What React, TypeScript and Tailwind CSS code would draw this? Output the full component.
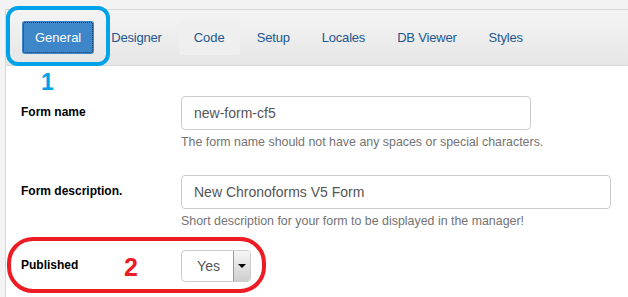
import React from 'react';

const tabs = ['General', 'Designer', 'Code', 'Setup', 'Locales', 'DB Viewer', 'Styles'];

function Tab({ label }: { label: string }) {
  if (label === 'General')
    return <div className="h-[33px] px-[13px] flex items-center rounded-[3px] bg-[#3d86c9] text-white outline-1 outline-dotted outline-[#1b3550] -outline-offset-2">{label}</div>;
  if (label === 'Code')
    return <div className="h-[35px] px-[15px] flex items-center rounded-[3px] bg-[#efefef] text-[#21578f]">{label}</div>;
  return <div className="h-[35px] px-[15px] flex items-center text-[#21578f] tracking-[-0.2px]">{label}</div>;
}

function Row({ label, children, help }: { label: string; children: React.ReactNode; help?: string }) {
  return <div className="flex mb-[24px]">
    <div className="w-[160px] shrink-0 pt-[6px] text-[12px] leading-[20px] font-bold text-black">{label}</div>
    <div className="flex-1">
      {children}
      {help && <p className="mt-[4px] text-[12.4px] leading-[17px] text-[#737373]">{help}</p>}
    </div>
  </div>
}

export default function App() {
  return <div className="relative w-[628px] h-[297px] overflow-hidden bg-[#f3f3f3] pl-[5px] pt-[9px] font-['Liberation_Sans',Arial,sans-serif]">
    <div className="h-full border-l border-t border-[#d6d6d6] bg-white">
      <div className="h-[56px] flex items-center gap-[2px] pl-[16px] text-[13px] bg-gradient-to-b from-[#f4f4f4] to-[#e6e6e6] border-b border-[#d9d9d9]">
        {tabs.map(t => <Tab key={t} label={t} />)}
      </div>
      <div className="pt-[30px] pl-[15px]">
        <Row label="Form name" help="The form name should not have any spaces or special characters.">
          <div className="w-[350px] h-[34px] border border-[#cccccc] rounded-[4px] px-[12px] flex items-center text-[14px] text-[#555]">new-form-cf5</div>
        </Row>
        <Row label="Form description." help="Short description for your form to be displayed in the manager!">
          <div className="w-[430px] h-[34px] border border-[#cccccc] rounded-[4px] px-[12px] flex items-center text-[14px] text-[#555]">New Chronoforms V5 Form</div>
        </Row>
        <div className="flex -mt-[4px]">
          <div className="w-[160px] shrink-0 pt-[5px] text-[12px] leading-[20px] font-bold text-black">Published</div>
          <div className="w-[70px] h-[32px] border border-[#cccccc] rounded-[4px] flex overflow-hidden">
            <div className="flex-1 flex items-center justify-center text-[14px] text-[#555] pl-[2px]">Yes</div>
            <div className="w-[17px] border-l border-[#999] bg-gradient-to-b from-[#f6f6f6] to-[#cfcfcf] flex items-center justify-center">
              <div className="w-0 h-0 border-l-[4px] border-r-[4px] border-t-[4px] border-l-transparent border-r-transparent border-t-black" />
            </div>
          </div>
        </div>
      </div>
    </div>
    <div className="absolute left-[6px] top-[6px] w-[104px] h-[60px] border-[4px] border-[#00a2e8] rounded-[12px]" />
    <div className="absolute left-[41px] top-[71px] text-[23px] font-bold text-[#00a2e8] leading-none">1</div>
    <div className="absolute left-[7px] top-[237px] w-[259px] h-[56px] border-[4px] border-[#ed1c24] rounded-[26px]" />
    <div className="absolute left-[124px] top-[255px] text-[25px] font-bold text-[#ed1c24] leading-none">2</div>
  </div>
}
